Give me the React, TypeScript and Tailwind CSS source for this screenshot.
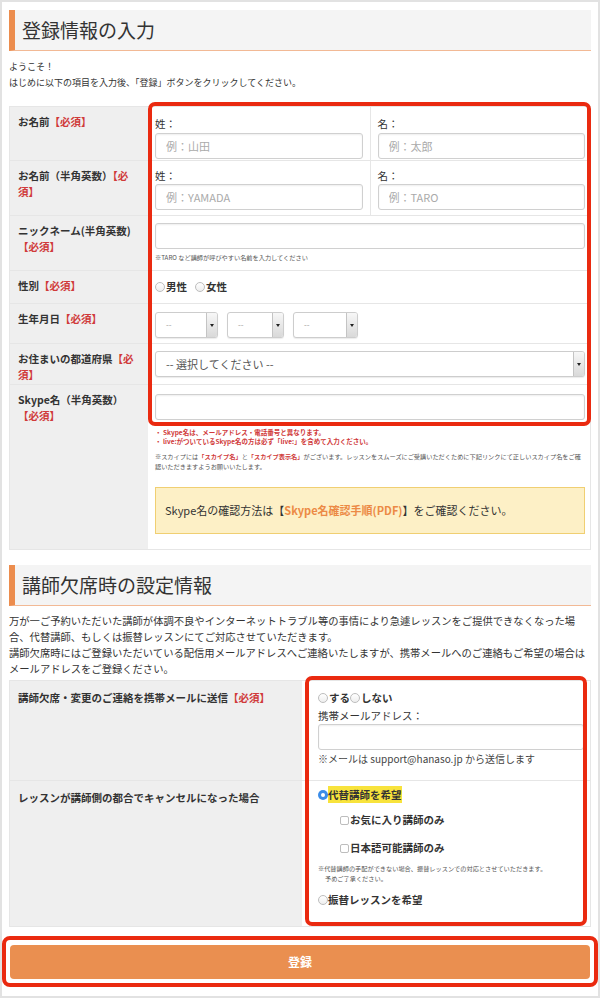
import React from 'react'

const Req = () => <span className="text-[#d03a3a]">【必須】</span>

const Heading = ({ children }: { children: React.ReactNode }) => (
  <div className="flex h-[41px] items-center border-l-[6px] border-b border-l-[#ec8d4e] border-b-[#f2b995] bg-[#f4f4f4] pl-[7px] text-[19px] text-[#333]">
    {children}
  </div>
)

const Radio = ({ checked = false }: { checked?: boolean }) =>
  checked ? (
    <span className="inline-flex h-[10px] w-[10px] shrink-0 items-center justify-center rounded-full bg-[#3b8ce8]">
      <span className="h-[4px] w-[4px] rounded-full bg-white" />
    </span>
  ) : (
    <span className="inline-block h-[10px] w-[10px] shrink-0 rounded-full border border-[#bdbdbd] bg-gradient-to-b from-white to-[#eee]" />
  )

const Check = () => (
  <span className="inline-block h-[9px] w-[9px] shrink-0 rounded-[2px] border border-[#bdbdbd] bg-white" />
)

const TextInput = ({ placeholder = '' }: { placeholder?: string }) => (
  <input
    readOnly
    placeholder={placeholder}
    className="block h-[26px] w-full rounded-[3px] border border-[#d0d0d0] bg-white px-[10px] text-[11px] shadow-[inset_0_1px_2px_rgba(0,0,0,0.07)] outline-none placeholder:text-[#aaa]"
  />
)

const Select = ({ className, text, textClass }: { className: string; text: string; textClass: string }) => (
  <div className={`flex h-[26px] items-stretch overflow-hidden rounded-[3px] border border-[#cdcdcd] bg-white shadow-[0_1px_1px_rgba(0,0,0,0.08)] ${className}`}>
    <div className={`flex flex-1 items-center pl-[10px] ${textClass}`}>{text}</div>
    <div className="flex w-[11px] items-center justify-center border-l border-[#c4c4c4] bg-gradient-to-b from-[#f7f7f7] to-[#d9d9d9]">
      <span className="h-0 w-0 border-l-[2px] border-r-[2px] border-t-[3px] border-l-transparent border-r-transparent border-t-[#222]" />
    </div>
  </div>
)

const Label = ({ children }: { children: React.ReactNode }) => (
  <div className="w-[138px] shrink-0 bg-[#efefef] pl-[8px] pr-[8px] pt-[7px] text-[10.5px] font-bold leading-[16px] text-[#333]">
    {children}
  </div>
)

export default function App() {
  return (
    <div className="h-[998px] w-[600px] bg-[#e2e2e2] p-[2px] font-['Noto_Sans_CJK_JP','Noto_Sans',sans-serif] text-[#333]">
      <div className="h-full bg-white px-[7px] pt-[8px]">
        <Heading>登録情報の入力</Heading>

        <div className="mt-[8px] text-[9px] leading-[16px]">
          <p>ようこそ！</p>
          <p>はじめに以下の項目を入力後、「登録」ボタンをクリックしてください。</p>
        </div>

        {/* 基本情報 */}
        <div className="relative mt-[15px] border border-[#e6e6e6]">
          <div className="flex h-[54px] border-b border-[#e6e6e6]">
            <Label>
              お名前<Req />
            </Label>
            <div className="flex flex-1">
              <div className="flex-1 px-[7px] pt-[9px]">
                <div className="text-[10.5px] leading-[15px]">姓：</div>
                <div className="mt-[2px]">
                  <TextInput placeholder="例：山田" />
                </div>
              </div>
              <div className="flex-1 border-l border-[#e6e6e6] pl-[7px] pr-[5px] pt-[9px]">
                <div className="text-[10.5px] leading-[15px]">名：</div>
                <div className="mt-[2px]">
                  <TextInput placeholder="例：太郎" />
                </div>
              </div>
            </div>
          </div>

          <div className="flex h-[55px] border-b border-[#e6e6e6]">
            <Label>
              お名前（半角英数）<span className="text-[#d03a3a]">【必</span>
              <br />
              <span className="text-[#d03a3a]">須】</span>
            </Label>
            <div className="flex flex-1">
              <div className="flex-1 px-[7px] pt-[7px]">
                <div className="text-[10.5px] leading-[15px]">姓：</div>
                <div className="mt-[1px]">
                  <TextInput placeholder="例：YAMADA" />
                </div>
              </div>
              <div className="flex-1 border-l border-[#e6e6e6] pl-[7px] pr-[5px] pt-[7px]">
                <div className="text-[10.5px] leading-[15px]">名：</div>
                <div className="mt-[1px]">
                  <TextInput placeholder="例：TARO" />
                </div>
              </div>
            </div>
          </div>

          <div className="flex h-[55px] border-b border-[#e6e6e6]">
            <Label>
              ニックネーム(半角英数)
              <br />
              <Req />
            </Label>
            <div className="flex-1 pl-[7px] pr-[5px] pt-[7px]">
              <TextInput />
              <p className="mt-[4px] text-[6.2px] leading-[10px] text-[#555]">※TARO など講師が呼びやすい名前を入力してください</p>
            </div>
          </div>

          <div className="flex h-[33px] border-b border-[#e6e6e6]">
            <Label>
              性別<Req />
            </Label>
            <div className="flex flex-1 items-center gap-[8px] pl-[7px] text-[10.5px] font-bold">
              <span className="flex items-center gap-[1px]">
                <Radio />
                男性
              </span>
              <span className="flex items-center gap-[1px]">
                <Radio />
                女性
              </span>
            </div>
          </div>

          <div className="flex h-[40px] border-b border-[#e6e6e6]">
            <Label>
              生年月日<Req />
            </Label>
            <div className="flex flex-1 gap-[9px] pl-[7px] pt-[8px]">
              <Select className="w-[63px]" text="--" textClass="text-[8px] text-[#999]" />
              <Select className="w-[57px]" text="--" textClass="text-[8px] text-[#999]" />
              <Select className="w-[65px]" text="--" textClass="text-[8px] text-[#999]" />
            </div>
          </div>

          <div className="flex h-[41px] border-b border-[#e6e6e6]">
            <Label>
              お住まいの都道府県<span className="text-[#d03a3a]">【必</span>
              <br />
              <span className="text-[#d03a3a]">須】</span>
            </Label>
            <div className="flex-1 pl-[7px] pr-[5px] pt-[7px]">
              <Select className="w-full" text="-- 選択してください --" textClass="text-[11px] text-[#555]" />
            </div>
          </div>

          <div className="flex h-[164px]">
            <Label>
              Skype名（半角英数）
              <br />
              <Req />
            </Label>
            <div className="flex-1 pl-[7px] pr-[5px] pt-[9px]">
              <TextInput />
              <div className="mt-[8px] text-[6.5px] font-bold leading-[9px] text-[#d03a3a]">
                <p>・ Skype名は、メールアドレス・電話番号と異なります。</p>
                <p>・ live:がついているSkype名の方は必ず「live:」を含めて入力ください。</p>
              </div>
              <div className="mt-[6px] text-[6.2px] leading-[10px] text-[#555]">
                <p className="whitespace-nowrap">
                  ※スカイプには<span className="font-bold text-[#d03a3a]">「スカイプ名」</span>と<span className="font-bold text-[#d03a3a]">「スカイプ表示名」</span>がございます。レッスンをスムーズにご受講いただくために下記リンクにて正しいスカイプ名をご確
                </p>
                <p>認いただきますようお願いいたします。</p>
              </div>
              <div className="mt-[15px] flex h-[47px] items-center border border-[#f0cf72] bg-[#fdf0c6] pl-[9px] text-[11px]">
                Skype名の確認方法は【<span className="font-bold text-[#ec8a45]">Skype名確認手順(PDF)</span>】をご確認ください。
              </div>
            </div>
          </div>

          <div className="pointer-events-none absolute left-[138px] right-[-1px] top-[-5px] h-[324px] rounded-[7px] border-[4px] border-[#ea2a10]" />
        </div>

        <div className="mt-[15px]">
          <Heading>講師欠席時の設定情報</Heading>
        </div>

        <div className="mt-[7px] text-[10.3px] leading-[16px] text-[#333]">
          <p>
            万が一ご予約いただいた講師が体調不良やインターネットトラブル等の事情により急遽レッスンをご提供できなくなった場合、代替講師、もしくは振替レッスンにてご対応させていただきます。
          </p>
          <p>
            講師欠席時にはご登録いただいている配信用メールアドレスへご連絡いたしますが、携帯メールへのご連絡もご希望の場合はメールアドレスをご登録ください。
          </p>
        </div>

        {/* 講師欠席時 */}
        <div className="relative mt-[3px] border border-[#e6e6e6]">
          <div className="flex h-[100px] border-b border-[#e6e6e6]">
            <div className="w-[292px] shrink-0 bg-[#efefef] pl-[8px] pt-[9px] text-[10.5px] font-bold leading-[16px]">
              講師欠席・変更のご連絡を携帯メールに送信<Req />
            </div>
            <div className="flex-1 pl-[16px] pr-[6px] pt-[9px]">
              <div className="flex items-center text-[10.5px] font-bold leading-[15px]">
                <Radio />
                <span className="ml-[1px]">する</span>
                <Radio />
                <span className="ml-[1px]">しない</span>
              </div>
              <div className="mt-[3px] text-[10.5px] leading-[15px]">携帯メールアドレス：</div>
              <div className="mt-[1px]">
                <TextInput />
              </div>
              <p className="mt-[1px] text-[10px] leading-[15px] text-[#444]">※メールは support@hanaso.jp から送信します</p>
            </div>
          </div>

          <div className="flex h-[145px]">
            <div className="w-[292px] shrink-0 bg-[#efefef] pl-[8px] pt-[9px] text-[10.5px] font-bold leading-[16px]">
              レッスンが講師側の都合でキャンセルになった場合
            </div>
            <div className="flex-1 pl-[16px] pt-[5px]">
              <div className="flex items-center text-[10.5px] font-bold leading-[17px]">
                <Radio checked />
                <span className="bg-[#f8e33c]">代替講師を希望</span>
              </div>
              <div className="mt-[9px] flex items-center gap-[1px] pl-[22px] text-[10.5px] font-bold leading-[16px]">
                <Check />
                お気に入り講師のみ
              </div>
              <div className="mt-[12px] flex items-center gap-[1px] pl-[22px] text-[10.5px] font-bold leading-[16px]">
                <Check />
                日本語可能講師のみ
              </div>
              <div className="mt-[8px] text-[6.2px] leading-[10px] text-[#555]">
                <p>※代替講師の手配ができない場合、振替レッスンでの対応とさせていただきます。</p>
                <p className="pl-[7px]">予めご了承ください。</p>
              </div>
              <div className="mt-[8px] flex items-center text-[10.5px] font-bold leading-[16px]">
                <Radio />
                振替レッスンを希望
              </div>
            </div>
          </div>

          <div className="pointer-events-none absolute left-[295px] right-[3px] top-[-5px] h-[250px] rounded-[7px] border-[4px] border-[#ea2a10]" />
        </div>

        <div className="relative mx-[1px] mt-[18px]">
          <button className="flex h-[34px] w-full items-center justify-center rounded-[4px] bg-[#ea8f50] text-[12px] font-bold text-white">
            登録
          </button>
          <div className="pointer-events-none absolute -bottom-[8px] -left-[8px] -right-[8px] -top-[9px] rounded-[8px] border-[4px] border-[#ea2a10]" />
        </div>
      </div>
    </div>
  )
}
